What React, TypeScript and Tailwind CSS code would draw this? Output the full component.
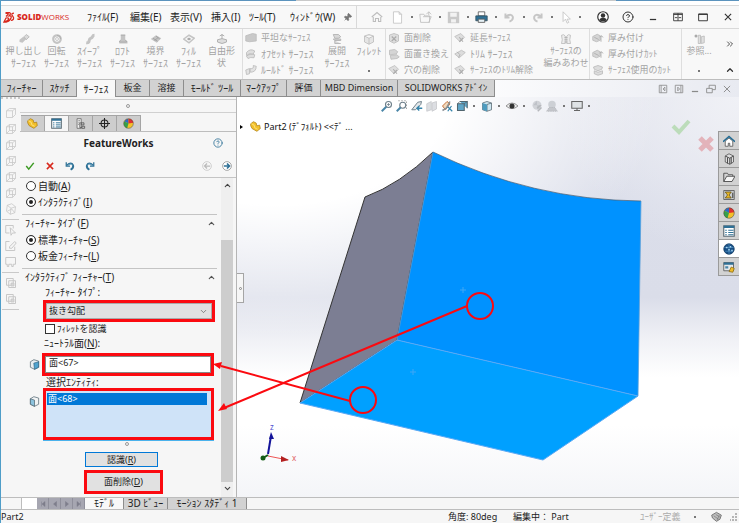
import type { ReactNode } from 'react';
import clsx from 'clsx';
import { ChevronDown, ChevronUp, ChevronsRight, CircleHelp, Pin } from 'lucide-react';

const G = '#c4c4c4';
const D = '#4a4a4a';
const B = '#2f7196';

// 16x16 drawings, keyed by name
const icons: Record<string, ReactNode> = {
  extrude: <><path d="M2 9l5-4 4 3-5 5-4-1z" fill={G} /><path d="M8 5l3-3 4 3-4 4z" fill="#dadada" stroke="#b0b0b0" /></>,
  revolve: <><circle cx="8" cy="8" r="5" fill="none" stroke={G} strokeWidth="3" /><path d="M8 3a5 5 0 0 1 5 5" fill="none" stroke="#aaa" /><circle cx="8" cy="8" r="2" fill="none" stroke="#bbb" /></>,
  sweep: <path d="M3 13c6 1 2-5 6-6 4-1 1-4 5-4" fill="none" stroke={G} strokeWidth="4" />,
  loft: <><path d="M5 2h6v7l3 2v3H3v-3l2-2z" fill={G} /><path d="M5 3h6M5 9l-2 3h10l-2-3" fill="none" stroke="#aaa" /></>,
  boundary: <><path d="M1 8l7-5 7 4-6 6z" fill={G} /><path d="M4 7l6 4M8 4l5 4M6 10l5-4" stroke="#999" /></>,
  fill: <><path d="M1 8l7-5 7 4-7 6z" fill="none" stroke={G} strokeWidth="2" /><path d="M5 8l3-2 3 2-3 2z" fill="#aaa" /></>,
  freeform: <><path d="M2 9q6-3 12 0v3q-6 4-12 0zM8 2v6M5 4l3-2 3 2" fill="#ddd" stroke="#b0b0b0" strokeWidth="1.3" /></>,
  flat: <path d="M1 5l9-3 5 1v9l-9 1-5-1z" fill="#c9c9c9" stroke="#bababa" />,
  offset: <><path d="M2 6q5-6 11-2l-2 4q-5-2-9 2zM2 11q4-4 11-2l-1 4q-5-1-8 1z" fill="#dedede" stroke="#b5b5b5" /></>,
  ruled: <path d="M1 8l5-2v7l-4 1zM7 6q5 1 4-4l4 1q0 8-8 8z" fill="#e3e3e3" stroke="#b5b5b5" />,
  unroll: <path d="M3 2h7l3 3-3 2H5zM3 8h10v2H5zM5 10v4h8" fill="#d8d8d8" stroke="#aaa" />,
  cube: <path d="M2 4l6-2 6 2v8l-6 3-6-3zM2 4l6 3 6-3M8 7v8" fill="#e5e5e5" stroke="#b8b8b8" />,
  delFace: <><path d="M2 4l6-2 6 2v8l-6 3-6-3z" fill="#ddd" stroke="#b8b8b8" /><path d="M5 6l6 6M11 6l-6 6" stroke="#aaa" strokeWidth="1.5" /></>,
  swapFace: <><path d="M2 3l7-1 4 3-2 3-9 1zM3 10l9-1 3 3-3 2-8 1z" fill="#d5d5d5" stroke="#b8b8b8" /></>,
  patch: <><path d="M1 6l8-4 5 5-6 6z" fill="#dedede" stroke="#bababa" /><path d="M7 7l5 6M12 8l-5 5" stroke="#aeaeae" strokeWidth="1.5" /></>,
  trim: <><path d="M1 8l9-5 5 3-8 7z" fill="#dcdcdc" stroke="#b8b8b8" /><path d="M4 5l4 4-2 4" fill="none" stroke="#a5a5a5" /></>,
  knit: <><path d="M2 3q3-2 5 1v10H2l1-5zM14 3q-3-2-5 1v10h5l-1-5z" fill="#eee" stroke="#b5b5b5" /><path d="M6 6h4M6 9h4M6 12h4" stroke="#aaa" /></>,
  thicken: <><path d="M1 6l6-3 4 2v6l-5 2-5-2z" fill="#d5d5d5" stroke="#b5b5b5" /><path d="M12 5v8M10 7l2-2 3 2M3 7l6 3" fill="none" stroke="#a5a5a5" /></>,
  cut: <><path d="M2 4l6-2 6 2-1 3-5 2-5-2zM3 9l5 2 6-2v4l-6 2-5-2z" fill="#dcdcdc" stroke="#b5b5b5" /></>,
  refGeom: <><circle cx="4" cy="4" r="2" fill="#aaa" /><path d="M7 3h3v11H7zM11 5l4-1v9l-4 1z" fill="#e0e0e0" stroke="#b5b5b5" /></>,
  home: <path d="M1 8l7-6 7 6M3 8v6h3v-4h4v4h3V8" fill="none" stroke="#bcbcbc" strokeWidth="1.4" />,
  doc: <path d="M3 1h7l3 3v11H3zM10 1v3h3" fill="#fff" stroke="#c2c2c2" />,
  open: <path d="M1 4h5l1 2h6v8H2zM5 7h10l-3 7M9 4l3-3 3 3M12 1v4" fill="none" stroke="#bdbdbd" />,
  save: <><path d="M1 1h14v14H1z" fill="#c9c9c9" /><path d="M4 2h8v5H4zM5 10h6v4H5z" fill="#f2f2f2" /></>,
  print: <><path d="M4 1h8v5H4z" fill="#fff" stroke="#555" /><path d="M1 6h14v6H1z" fill={B} stroke="#35505e" /><path d="M4 10h8v4H4z" fill="#e6f1f6" stroke="#555" /></>,
  undoGray: <path d="M3 3v5h5M3 7q7-5 9 0 1 4-4 6" fill="none" stroke="#c6c6c6" strokeWidth="2.4" />,
  redoGray: <path d="M13 3v5H8M13 7Q6 2 4 7q-1 4 4 6" fill="none" stroke="#c6c6c6" strokeWidth="2.4" />,
  cursor: <path d="M5 1v12l3-3 2 5 2-1-2-4h4z" fill="#fff" stroke="#c2c2c2" />,
  user: <><circle cx="8" cy="8" r="7" fill="#fff" stroke="#333" strokeWidth="1.6" /><circle cx="8" cy="6" r="3" fill="#333" /><path d="M3 12q1-3 5-3t5 3q-5 4-10 0z" fill="#333" /></>,
  min: <path d="M3 12h10" stroke="#333" strokeWidth="2" />,
  split: <path d="M1 2h14v12H1zM8 2v12M1 4h14M3 9h4M9 9h4" fill="none" stroke="#333" strokeWidth="1.4" />,
  max: <path d="M1 3h14v11H1zM1 4h14" fill="none" stroke="#333" strokeWidth="1.5" />,
  close: <path d="M3 3l10 10M13 3L3 13" stroke="#333" strokeWidth="1.8" />,
  paneL: <path d="M2 2h12v12H2zM5 2v12M11 5L8 8l3 3z" fill="none" stroke="#8a8a8a" strokeWidth="1.3" />,
  paneR: <path d="M2 2h12v12H2zM11 2v12M6 5l3 3-3 3z" fill="none" stroke="#8a8a8a" strokeWidth="1.3" />,
  minGray: <path d="M3 12h10" stroke="#8a8a8a" strokeWidth="2" />,
  restore: <path d="M1 7h9v7H1zM5 7V2h10v7h-5" fill="none" stroke="#8a8a8a" strokeWidth="1.4" />,
  closeGray: <path d="M3 3l10 10M13 3L3 13" stroke="#8a8a8a" strokeWidth="1.5" />,
  part: <><path d="M1 4l4-3 4 2 1 4 4-1 1 5-5 4-7-4-2-4z" fill="#f3c12b" stroke="#a9790f" /><path d="M2 4l4 2 1 4 4 2" fill="none" stroke="#fce58a" strokeWidth="1.2" /></>,
  props: <><path d="M1 1h14v14H1z" fill="#fff" stroke="#5a6a74" strokeWidth="1.5" /><path d="M1 1h14v3H1z" fill={B} /><path d="M3 7h2M3 10h2M3 13h2M7 7h7M7 10h7M7 13h7" stroke={B} strokeWidth="1.4" /></>,
  config: <><path d="M3 1h6v14H3z" fill="#f0f0f0" stroke="#555" /><path d="M5 4h2M5 7h2M5 10l4-4M9 7h4v3H9zM10 12h4v3h-4zM7 9v5h3" fill="none" stroke="#555" strokeWidth="1.2" /></>,
  target: <><circle cx="8" cy="8" r="5" fill="none" stroke="#222" strokeWidth="1.5" /><path d="M8 0v16M0 8h16" stroke="#222" strokeWidth="1.5" /></>,
  ball: <><circle cx="8" cy="8" r="7" fill="#f3c12b" /><path d="M8 8V1a7 7 0 0 0-6 4z" fill="#2b6cc4" /><path d="M8 8V1a7 7 0 0 1 7 6z" fill="#e03030" /><path d="M8 8l-6-3a7 7 0 0 0 4 10z" fill="#35a04a" /><circle cx="8" cy="8" r="7" fill="none" stroke="#444" strokeWidth=".7" /></>,
  ok: <path d="M2 8l4 5 8-10" fill="none" stroke="#3c9a22" strokeWidth="2.4" />,
  cancel: <path d="M3 3l10 10M13 3L3 13" stroke="#d8281c" strokeWidth="2.4" />,
  undo: <><path d="M2 2v6h6" fill="none" stroke={B} strokeWidth="2" /><path d="M3 7q7-6 10 0 1 4-4 7" fill="none" stroke={B} strokeWidth="3" /><path d="M4 7q6-4 8 0" fill="none" stroke="#8fc3dc" /></>,
  redo: <><path d="M14 2v6H8" fill="none" stroke={B} strokeWidth="2" /><path d="M13 7Q6 1 3 7q-1 4 4 7" fill="none" stroke={B} strokeWidth="3" /><path d="M12 7Q6 3 4 7" fill="none" stroke="#8fc3dc" /></>,
  back: <><circle cx="8" cy="8" r="7" fill="none" stroke="#bbb" /><path d="M13 8H4M8 4L4 8l4 4" fill="none" stroke="#bbb" strokeWidth="2" /></>,
  next: <><circle cx="8" cy="8" r="7" fill="#fff" stroke="#777" /><path d="M3 8h9M8 4l4 4-4 4" fill="none" stroke={B} strokeWidth="2.6" /></>,
  faceBlue: <><path d="M2 4l5-3 7 2v9l-6 3-6-3z" fill="#e8eef1" stroke="#4a5f6b" /><path d="M7 6l7-2v8l-6 3z" fill="#4fa3cf" stroke="#2b6382" /></>,
  faceLine: <><path d="M2 4l5-3 7 2v9l-6 3-6-3z" fill="#f1f3f4" stroke="#4a5f6b" /><path d="M2 4l6 2v9l-6-3z" fill="#8cc3de" stroke="#4a5f6b" /></>,
  zoomFit: <><circle cx="10" cy="6" r="4" fill="#fff" stroke="#6e7f8a" strokeWidth="1.5" /><path d="M7 9l-6 6" stroke="#4a86a8" strokeWidth="2.6" /><path d="M8 6h4M10 4v4" stroke="#6e7f8a" /></>,
  zoomArea: <><circle cx="9" cy="7" r="4" fill="#fff" stroke="#6e7f8a" strokeWidth="1.5" /><path d="M6 10l-5 5" stroke="#4a86a8" strokeWidth="2.6" /><path d="M3 1h11v11" fill="none" stroke="#888" strokeDasharray="2 2" /></>,
  prevView: <><path d="M1 13l8-10 5-1-1 4-7 7z" fill="#e4e8ea" stroke="#6e7f8a" strokeWidth="1.3" /><path d="M15 11H8M11 8l-3 3 3 3" fill="none" stroke="#3584ab" strokeWidth="2" /></>,
  section: <path d="M1 5l6-3v11l-6 2zM8 4l6-2v10l-6 3z" fill="#dcdee2" stroke="#c4c6ca" />,
  dynView: <><path d="M2 8l6-6 4 3-6 8z" fill="#f3d9bb" stroke="#c2703a" strokeWidth="1.3" /><path d="M2 14l5-3 5-9" fill="none" stroke="#8a8f94" strokeWidth="2" /><path d="M9 9l6 6M9 15l5-7" stroke="#3584ab" strokeWidth="1.6" /></>,
  orient: <><path d="M2 5h9v9H2zM5 2h10v9" fill="#5fa6c8" stroke="#51656f" strokeWidth="1.4" /><path d="M2 5l3-3M11 5l4-3" stroke="#51656f" /></>,
  display: <><path d="M2 4l6-2 6 2v9l-6 2-6-2z" fill="#cfe6f0" stroke="#54656f" /><path d="M8 6v9M8 6l6-2" stroke="#54656f" /><path d="M2 4l6 2v9l-6-2z" fill="#4d9bbf" /></>,
  eye: <><path d="M0 8q8-8 16 0-8 7-16 0z" fill="#eee" stroke="#777" /><circle cx="8" cy="8" r="3.4" fill="#333" /></>,
  paint: <><circle cx="8" cy="7" r="6" fill="#d1d3d8" /><path d="M3 7l5-6v6zM8 7h6l-5 6z" fill="#bfc2c8" /><path d="M8 11l5-4M9 15l5-5" stroke="#b5b7bb" strokeWidth="2" /></>,
  scene: <><circle cx="8" cy="6" r="5" fill="#cdd0d5" /><path d="M1 15l3-5h8l3 5z" fill="#c4c6cb" stroke="#b2b4b9" strokeDasharray="2 1" /></>,
  monitor: <><path d="M1 2h14v9H1z" fill="#dfe3e6" stroke="#666" strokeWidth="1.4" /><path d="M8 11v3M4 14h8" stroke="#666" strokeWidth="1.5" /></>,
  homeBlue: <><path d="M3 8v7h4v-4h2v4h4V8L8 4z" fill="#fff" stroke={D} /><path d="M0 9l8-7 8 7" fill="none" stroke="#236b93" strokeWidth="2.2" /></>,
  library: <><path d="M3 4l5-3 6 3v8l-5 3-6-3z" fill="#ddd" stroke={D} /><path d="M3 4l6 3v8M6 6v8M9 7l5-3M11 6v8" fill="none" stroke={D} strokeWidth="1.3" /></>,
  folder: <path d="M1 3h5l1 2h6v2M1 3v11h11l4-7H5l-4 7" fill="#f6f6f6" stroke={D} strokeWidth="1.2" />,
  palette: <><path d="M1 2h14v12H1z" fill="#c9cdd0" stroke={D} /><path d="M3 4h8l-3 4 3 4H3l3-4z" fill="#eab825" stroke="#5e4c10" /><path d="M13 5v7" stroke={D} strokeWidth="1.5" /></>,
  globe: <><circle cx="8" cy="8" r="7" fill="#174f86" stroke="#173d63" /><path d="M2 6h12M3 11h10M8 1v14" fill="none" stroke="#5d9dcb" strokeWidth=".8" /><path d="M4 5h2v2H4zM9 4h2v2H9zM7 8h2v2H7zM11 9h2v2h-2z" fill="#a5d5f2" /></>,
  forum: <><path d="M1 2h13v11H1z" fill="#e5e9eb" stroke={D} /><path d="M1 2h13v3H1z" fill={B} /><path d="M3 7h4v3H3z" fill="#4a86a8" /><path d="M8 14l3-6 4 2-2 5z" fill="#f0bd2b" stroke="#8a6a10" /></>,
  tag: <><path d="M1 6l7-4 7 4-2 6-5 3-6-5z" fill="#bdbdbd" stroke="#666" strokeWidth="1.2" /><path d="M4 7l7 5M7 5l6 4M9 13l3-7" stroke="#777" /></>,
  frameA: <path d="M2 5l4-3h8v8l-4 4H2zM2 5h8v9M10 5l4-3" fill="none" stroke="#c6c6c6" />,
  frameB: <path d="M2 5l4-3h8v8l-4 4H2zM2 5h8v9M10 5l4-3M6 2v8h8M2 14l4-4" fill="none" stroke="#c6c6c6" />,
  frameC: <path d="M3 3l6-2 5 4-1 8-6 2-5-4zM3 3l5 4 6-2M8 7l-1 8M3 11l6-3 4 5" fill="none" stroke="#c6c6c6" />,
  frameD: <path d="M1 2h13v9h-3v3H9v-3H5v3H3v-3H1z" fill="none" stroke="#c6c6c6" strokeWidth="1.3" />,
  pick: <path d="M1 2h10v4M1 2v10h5M7 5l7 7-4 0-2 3z" fill="none" stroke="#c6c6c6" strokeWidth="1.3" />,
  edit: <path d="M6 2H1v12h12V9M6 9l7-7 2 2-6 7H6z" fill="none" stroke="#c6c6c6" strokeWidth="1.3" />,
  copy: <><path d="M2 2h9v9H2zM5 5h9v9H5z" fill="#f6f6f6" stroke="#c6c6c6" strokeWidth="1.3" /><path d="M8 8h4v4H8z" fill="#d6d6d6" stroke="#c6c6c6" /></>,
};

function Icon({ name, className = 'size-3' }: { name: string; className?: string }) {
  return (
    <svg viewBox="0 0 16 16" className={clsx('shrink-0', className)} aria-hidden="true">
      {icons[name]}
    </svg>
  );
}

function Dot({ className = 'w-2' }: { className?: string }) {
  return (
    <span className={clsx('flex justify-center', className)}>
      <span className="size-[2px] bg-[#777]" />
    </span>
  );
}

// half-width kana run small, so they get the larger size
const labelSize = (text: string) => (/^[\uff66-\uff9f ]+$/.test(text) ? 'text-[10px]' : 'text-[9px]');

const menus = ['ﾌｧｲﾙ(F)', '編集(E)', '表示(V)', '挿入(I)', 'ﾂｰﾙ(T)', 'ｳｨﾝﾄﾞｳ(W)'];

const quickTools = ['doc', 'open', 'save', 'print', 'undoGray', 'redoGray', 'cursor'];

const bigTools = [
  { icon: 'extrude', lines: ['押し出し', 'ｻｰﾌｪｽ'] },
  { icon: 'revolve', lines: ['回転', 'ｻｰﾌｪｽ'] },
  { icon: 'sweep', lines: ['ｽｲｰﾌﾟ', 'ｻｰﾌｪｽ'] },
  { icon: 'loft', lines: ['ﾛﾌﾄ', 'ｻｰﾌｪｽ'] },
  { icon: 'boundary', lines: ['境界', 'ｻｰﾌｪｽ'] },
  { icon: 'fill', lines: ['ﾌｨﾙ', 'ｻｰﾌｪｽ'] },
  { icon: 'freeform', lines: ['自由形', '状'] },
];

const surfaceTools = [
  { icon: 'flat', label: '平坦なｻｰﾌｪｽ' },
  { icon: 'offset', label: 'ｵﾌｾｯﾄ ｻｰﾌｪｽ' },
  { icon: 'ruled', label: 'ﾙｰﾙﾄﾞ ｻｰﾌｪｽ' },
];
const faceTools = [
  { icon: 'delFace', label: '面削除' },
  { icon: 'swapFace', label: '面置き換え' },
  { icon: 'patch', label: '穴の削除' },
];
const trimTools = [
  { icon: 'patch', label: '延長ｻｰﾌｪｽ' },
  { icon: 'trim', label: 'ﾄﾘﾑ ｻｰﾌｪｽ' },
  { icon: 'patch', label: 'ｻｰﾌｪｽのﾄﾘﾑ解除' },
];
const thickTools = [
  { icon: 'thicken', label: '厚み付け' },
  { icon: 'thicken', label: '厚み付けｶｯﾄ' },
  { icon: 'cut', label: 'ｻｰﾌｪｽ使用のｶｯﾄ' },
];

const commandTabs = [
  { label: 'ﾌｨｰﾁｬｰ', width: 'w-[42px] text-[10px]' },
  { label: 'ｽｹｯﾁ', width: 'w-[34px] text-[10px]' },
  { label: 'ｻｰﾌｪｽ', width: 'w-[39px] text-[10px]' },
  { label: '板金', width: 'w-[34px] text-[9px]' },
  { label: '溶接', width: 'w-[34px] text-[9px]' },
  { label: 'ﾓｰﾙﾄﾞ ﾂｰﾙ', width: 'w-[57px] text-[10px]' },
  { label: 'ﾏｰｸｱｯﾌﾟ', width: 'w-[46px] text-[10px]' },
  { label: '評価', width: 'w-[34px] text-[9px]' },
  { label: 'MBD Dimension', width: 'w-[77px] text-[9px]' },
  { label: 'SOLIDWORKS ｱﾄﾞｲﾝ', width: 'w-[97px] text-[9px]' },
];

const headsUp = ['zoomFit', 'zoomArea', 'prevView', 'section', 'dynView', 'orient', '-', 'display', '-', 'eye', '-', 'paint', 'scene', '-', 'monitor', '-'];
const taskPane = ['homeBlue', 'library', 'folder', 'palette', 'ball', 'props', 'globe', 'forum'];
const sideIcons = ['frameA', 'frameB', 'frameB', 'frameB', 'frameB', 'frameB', 'frameC', '-', 'pick', 'edit', 'frameD', '-', 'copy', 'copy', '-'];

function TitleBar() {
  return (
    <header className="flex h-6 items-center border-t border-b border-[#d9d9d9] bg-[#f8f8f8]">
      <div className="flex w-[86px] shrink-0 items-center gap-[2px] pl-[2px]">
        <svg viewBox="0 0 24 24" className="size-3" aria-hidden="true">
          <path d="M5 3h8q4 2-1 7 6-1 4 4-2 6-9 8H2l4-8q8-1 4 4-3 3-6 3M5 5q7-1 5 2l-4 4M22 4q-5 0-4 4l3 5q1 5-5 6" fill="none" stroke="#d8281c" strokeWidth="2.5" />
        </svg>
        <span className="font-['Open_Sans'] text-[8px] text-[#d8281c]">
          <b className="font-extrabold">SOLID</b>WORKS
        </span>
      </div>
      <nav className="grid shrink-0 grid-cols-[43px_40px_41px_38px_41px_53px]">
        {menus.map((menu) => (
          <button key={menu} className="text-left text-[10px] whitespace-nowrap text-[#222]">
            {menu}
          </button>
        ))}
      </nav>
      <Pin className="size-[9px] shrink-0 rotate-45 fill-[#777] text-[#777]" />
      <div className="ml-1 flex h-full shrink-0 items-center border-l border-[#d9d9d9] pl-[14px]">
        <Icon name="home" />
        <div className="flex items-center pl-2">
          {quickTools.map((tool) => (
            <button key={tool} className="flex items-center" aria-label={tool}>
              <Icon name={tool} className="size-[13px]" />
              <Dot className="w-[15px]" />
            </button>
          ))}
        </div>
      </div>
      <div className="ml-auto flex items-center gap-[13px] pr-[5px]">
        <Icon name="user" className="size-3" />
        <CircleHelp className="size-3 shrink-0 text-[#333]" />
        {['min', 'split', 'max', 'close'].map((name) => (
          <button key={name} aria-label={name} className="flex w-3 justify-center">
            <Icon name={name} className="size-[10px]" />
          </button>
        ))}
      </div>
    </header>
  );
}

function BigTool({ icon, lines, className }: { icon: string; lines: string[]; className: string }) {
  return (
    <button className={clsx('flex shrink-0 flex-col items-center pt-1 whitespace-nowrap', className)}>
      <Icon name={icon} className="size-3" />
      {lines.map((line) => (
        <span key={line} className={clsx('leading-3', labelSize(line), 'leading-3')}>
          {line}
        </span>
      ))}
    </button>
  );
}

function ToolList({ items, className }: { items: { icon: string; label: string }[]; className: string }) {
  return (
    <div className={clsx('flex shrink-0 flex-col pt-[1px] pl-[2px]', className)}>
      {items.map((item) => (
        <button key={item.label} className={clsx('flex h-4 items-center gap-1 whitespace-nowrap', labelSize(item.label))}>
          <Icon name={item.icon} />
          {item.label}
        </button>
      ))}
    </div>
  );
}

function Ribbon() {
  return (
    <div className="flex h-[51px] border-b border-[#bdbdbd] bg-[#f8f8f8] text-[#a3a3a3]">
      <div className="flex shrink-0 pl-[6px]">
        {bigTools.map((tool) => (
          <BigTool key={tool.icon} {...tool} className="w-[33px]" />
        ))}
      </div>
      <ToolList items={surfaceTools} className="ml-[4px] w-[79px] border-l border-[#dedede]" />
      <BigTool icon="unroll" lines={['展開', 'ｻｰﾌｪｽ']} className="w-8" />
      <div className="flex flex-col items-center">
        <BigTool icon="cube" lines={['ﾌｨﾚｯﾄ']} className="w-8" />
        <span className="mt-[13px] size-[2px] bg-[#777]" />
      </div>
      <ToolList items={faceTools} className="w-[66px] border-l border-[#dedede]" />
      <ToolList items={trimTools} className="w-[92px] border-l border-[#dedede]" />
      <BigTool icon="knit" lines={['ｻｰﾌｪｽの', '編みあわせ']} className="w-[46px]" />
      <ToolList items={thickTools} className="w-[92px] border-l border-[#dedede]" />
      <div className="flex flex-col items-center border-l border-[#dedede]">
        <BigTool icon="refGeom" lines={['参照...']} className="w-[34px]" />
        <span className="mt-[13px] size-[2px] bg-[#777]" />
      </div>
      <div className="ml-auto flex flex-col items-center gap-4 pt-[10px] pr-1 text-[#333]">
        <ChevronsRight className="size-[10px]" />
        <ChevronUp className="size-[10px]" strokeWidth={3} />
      </div>
    </div>
  );
}

function CommandTabs() {
  return (
    <div className="flex h-[17px] bg-[#eceef4] bg-linear-to-r from-white from-60% to-[#e8eaf1]">
      <div className="flex shrink-0" role="tablist">
        {commandTabs.map((tab, index) => (
          <button
            key={tab.label}
            role="tab"
            aria-selected={index === 2}
            className={clsx(
              'border-r border-[#8d8d8d] leading-4 whitespace-nowrap text-[#222]',
              tab.width,
              index === 2 ? 'bg-[#f8f8f8]' : 'border-b bg-[#d2d2d2]',
            )}
          >
            {tab.label}
          </button>
        ))}
      </div>
      <div className="ml-auto flex items-center gap-[6px] pr-[7px]">
        {['paneL', 'paneR', 'minGray', 'restore', 'closeGray'].map((name) => (
          <Icon key={name} name={name} className="size-[10px]" />
        ))}
      </div>
    </div>
  );
}

function SideBar() {
  return (
    <aside className="flex w-[19px] shrink-0 flex-col items-center border-t-2 border-dotted border-[#c9c9c9] bg-[#f6f6f6] pt-[8px]">
      {sideIcons.map((name, index) =>
        name === '-' ? (
          <span key={index} className="mb-1 h-[1px] w-[17px] bg-[#c9c9c9]" />
        ) : (
          <Icon key={index} name={name} className="mb-1 size-3" />
        ),
      )}
    </aside>
  );
}

function Radio({ name, label, hotkey, checked }: { name: string; label: string; hotkey: string; checked?: boolean }) {
  return (
    <label className="flex h-4 items-center gap-[2px] pl-[4px] text-[10px]">
      <input
        type="radio"
        name={name}
        defaultChecked={checked}
        className="size-[10px] appearance-none rounded-full border border-[#333] bg-white checked:bg-[#222] checked:inset-ring-2 checked:inset-ring-white"
      />
      <span>
        {label}(<u>{hotkey}</u>)
      </span>
    </label>
  );
}

function GroupHeader({ label, hotkey }: { label: string; hotkey: string }) {
  return (
    <button className="mt-1 flex h-[18px] w-full items-center justify-between border-t border-[#c4c4c4] pr-[1px] pl-[3px] text-[10px]">
      <span>
        {label}(<u>{hotkey}</u>)
      </span>
      <ChevronUp className="size-[9px] text-[#555]" strokeWidth={3} />
    </button>
  );
}

function PropertyPanel() {
  return (
    <section className="flex w-[216px] shrink-0 flex-col bg-[#f6f6f6] text-[#222]">
      <div className="mt-[2px] flex h-[14px] items-center justify-center border-t border-b border-[#d0d0d0]">
        <span className="size-1 rounded-full border border-[#999]" />
      </div>
      <div className="flex h-[19px] items-end border-b border-[#bdbdbd] pl-[1px]">
        {['part', 'props', 'config', 'target', 'ball'].map((name, index) => (
          <button
            key={name}
            aria-label={name}
            className={clsx(
              'flex h-4 w-6 items-center justify-center border border-b-0 border-l-0 border-[#a5a5a5]',
              index === 1 ? 'bg-[#f6f6f6]' : 'bg-[#cdcdcd]',
            )}
          >
            <Icon name={name} className="size-[11px]" />
          </button>
        ))}
      </div>
      <div className="grid h-[22px] grid-cols-[4px_1fr_20px] items-center pr-[3px]">
        <h1 className="col-start-2 text-center font-['Noto_Sans'] text-[10px] font-bold">FeatureWorks</h1>
        <CircleHelp className="size-[10px] text-[#2f7196]" />
      </div>
      <div className="flex h-[24px] items-center gap-[10px] border-b border-[#c4c4c4] pr-1 pl-[5px]">
        <Icon name="ok" className="size-[10px]" />
        <Icon name="cancel" className="size-[10px]" />
        <Icon name="undo" className="size-[10px]" />
        <Icon name="redo" className="size-[10px]" />
        <span className="ml-auto" />
        <Icon name="back" className="size-[10px]" />
        <Icon name="next" className="size-[10px]" />
      </div>
      <div className="flex">
        <form className="flex h-[319px] w-[197px] flex-col pl-[2px]">
          <Radio name="mode" label="自動" hotkey="A" />
          <Radio name="mode" label="ｲﾝﾀﾗｸﾃｨﾌﾞ" hotkey="I" checked />
          <GroupHeader label="ﾌｨｰﾁｬｰ ﾀｲﾌﾟ" hotkey="F" />
          <Radio name="type" label="標準ﾌｨｰﾁｬｰ" hotkey="S" checked />
          <Radio name="type" label="板金ﾌｨｰﾁｬｰ" hotkey="L" />
          <GroupHeader label="ｲﾝﾀﾗｸﾃｨﾌﾞ ﾌｨｰﾁｬｰ" hotkey="T" />

          <label htmlFor="feature" className="h-[14px] pl-[23px] text-[10px] leading-3">ﾌｨｰﾁｬｰ ﾀｲﾌﾟ:</label>
          <div className="relative ml-[21px] flex h-[22px] w-[172px] border-[3px] border-[#fb0a10]">
            <select id="feature" className="w-full appearance-none border border-[#aaa] bg-[#e1e1e1] pl-[2px] text-[9px] leading-3">
              <option>抜き勾配</option>
            </select>
            <ChevronDown className="pointer-events-none absolute top-1 right-1 size-[9px] text-[#666]" />
          </div>
          <label className="flex h-[13px] items-center gap-[2px] pl-[23px] text-[9px]">
            <input type="checkbox" className="size-[10px] appearance-none border border-[#333] bg-white" />
            ﾌｨﾚｯﾄを認識
          </label>
          <label htmlFor="neutral" className="h-[18px] pl-[22px] text-[10px] leading-4">
            ﾆｭｰﾄﾗﾙ面(<u>N</u>):
          </label>

          <div className="flex items-center gap-[2px] pl-[7px]">
            <Icon name="faceBlue" className="size-[11px]" />
            <div className="flex h-[23px] w-[172px] border-[3px] border-[#fb0a10]">
              <input id="neutral" defaultValue="面<67>" className="w-full border border-[#888] bg-white pb-1 pl-[3px] text-[9px] leading-3" />
            </div>
          </div>
          <span id="entities" className="h-[12px] pl-[24px] text-[10px] leading-3">選択ｴﾝﾃｨﾃｨ:</span>
          <div className="flex items-start gap-[3px] pl-[7px]">
            <Icon name="faceLine" className="mt-2 size-[11px]" />
            <ul role="listbox" aria-labelledby="entities" className="h-[52px] w-[171px] border-[3px] border-[#fb0a10] bg-[#cfe3f8] shadow-[0_1px_0_#4ab2ec]">
              <li role="option" aria-selected className="mr-1 ml-[1px] mt-[2px] h-3 bg-[#0078d7] pl-[1px] text-[9px] leading-[11px] text-white">
                面&lt;68&gt;
              </li>
            </ul>
          </div>
          <span className="mt-[2px] ml-[103px] size-1 rounded-full border border-[#999]" />
          <button type="button" className="mt-[6px] ml-[63px] h-[15px] w-[73px] border border-[#0078d7] bg-[#e1e1e1] text-[9px] leading-3">
            認識(<u>R</u>)
          </button>
          <button type="button" className="mt-[3px] ml-[62px] h-6 w-[79px] border-[3px] border-[#fb0a10] bg-[#e1e1e1] text-[9px] leading-3">
            面削除(<u>D</u>)
          </button>
        </form>
        <div className="ml-1 flex w-3 flex-col items-center bg-[#efefef] pt-[3px] pb-1 text-[#444]">
          <ChevronUp className="size-[9px]" strokeWidth={3} />
          <span className="mt-[50px] w-full flex-1 bg-[#cdcdcd]" />
          <ChevronDown className="mt-[2px] size-[9px]" strokeWidth={3} />
        </div>
      </div>
    </section>
  );
}

function Viewport() {
  return (
    <main className="relative min-w-0 flex-1 overflow-hidden border-l border-[#b5b5b5] bg-[radial-gradient(ellipse_380px_240px_at_8%_0%,#fff_0%,#fff_45%,transparent_100%),radial-gradient(ellipse_180px_160px_at_100%_0%,#f0f1f6_0%,transparent_100%),linear-gradient(to_bottom,#e2e4ed_0%,#dbdeea_25%,#dadde9_50%,#eff0f5_60%,#fff_70%,#fff_82%,#f4f5f8_100%)]">
      <svg viewBox="237 97 502 400" className="absolute top-0 left-0 h-[400px] w-[502px]" role="img" aria-label="3D model">
        <path d="M365 197Q400 184 433 152L397 340 300 403z" fill="#7c7e93" stroke="#333" strokeWidth="1" />
        <path d="M433 152Q532 200 641 201L638 396 397 340z" fill="#0092ff" />
        <path d="M397 340L638 396 543 460 300 403z" fill="#00a0ff" stroke="#5aa8f5" strokeWidth="1" />
        <path d="M433 152Q532 200 641 201" fill="none" stroke="#4b5d70" strokeWidth=".7" />
        <path d="M433 152L397 340M641 201L638 396" fill="none" stroke="#5c9fd8" strokeWidth=".8" />
        <path d="M460 290h6M463 287v6M410 372h6M413 369v6" stroke="#3ea6f5" />
        <path d="M268 454l3-18" stroke="#14149a" strokeWidth="2" />
        <path d="M271 432l3 7h-5z" fill="#14149a" />
        <path d="M268 456l20 4" stroke="#ee5555" />
        <path d="M281 456l8 4-8 2z" fill="#b32020" />
        <path d="M268 455l-5 3" stroke="#145c14" strokeWidth="2" />
        <circle cx="263" cy="458" r="2.5" fill="#145c14" />
        <text x="270" y="430" fontSize="8" fill="#5050d0">z</text>
        <text x="292" y="461" fontSize="8" fill="#e06060">x</text>
      </svg>

      <div className="relative flex items-center pt-[3px] pl-[142px]">
        {headsUp.map((name, index) =>
          name === '-' ? (
            <Dot key={index} className="w-[10px]" />
          ) : (
            <span key={index} className="flex w-[15px] justify-center">
              <Icon name={name} className="size-3" />
            </span>
          ),
        )}
      </div>
      <div className="relative mt-2 flex items-center gap-[3px] pl-[3px] text-[9px] text-[#111]">
        <span className="mr-1 border-y-2 border-l-[3px] border-y-transparent border-l-black" />
        <Icon name="part" className="size-[11px]" />
        Part2 (ﾃﾞﾌｫﾙﾄ) &lt;&lt;ﾃﾞ ...
      </div>

      <svg viewBox="0 0 48 40" className="absolute top-5 right-[21px] h-10 w-12" aria-hidden="true">
        <path d="M3 9l6 6L19 4" fill="none" stroke="#bcdcba" strokeWidth="4" />
        <path d="M30 21l12 12M42 21L30 33" stroke="#e3b3ba" strokeWidth="5" />
      </svg>
      <div className="absolute top-[34px] right-0 flex w-[21px] flex-col border-t border-l border-[#9a9a9a]">
        {taskPane.map((name) => (
          <button
            key={name}
            aria-label={name}
            className={clsx('flex h-[18px] items-center justify-center border-b border-[#9a9a9a]', name === 'globe' ? 'bg-white' : 'bg-[#d2d2d2]')}
          >
            <Icon name={name} />
          </button>
        ))}
      </div>
      <div className="absolute top-[176px] left-0 flex h-[30px] w-[7px] items-center justify-center border border-l-0 border-[#a5a5a5] bg-[#f6f6f6]">
        <span className="size-[3px] rounded-full border border-[#888]" />
      </div>
    </main>
  );
}

function BottomBar() {
  return (
    <>
      <div className="flex h-[13px] border-t border-b border-[#bdbdbd] bg-[#f6f6f6] pl-[20px] text-[10px] leading-[11px] whitespace-nowrap text-[#222]">
        <span className="w-4 border-l border-[#bdbdbd] bg-white" />
        {['M5 3v10M12 3L6 8l6 5z', 'M11 3L5 8l6 5z', 'M5 3l6 5-6 5z', 'M11 3v10M4 3l6 5-6 5z'].map((d) => (
          <button key={d} aria-label="tab scroll" className="flex w-3 items-center justify-center border-r border-[#8f8f9b] bg-[#a6a6b1]">
            <svg viewBox="0 0 16 16" className="size-2">
              <path d={d} fill="#7d7d8b" stroke="#7d7d8b" />
            </svg>
          </button>
        ))}
        <button className="w-[38px] bg-[#f8f8f8]">ﾓﾃﾞﾙ</button>
        <button className="w-[45px] border-x border-[#8d8d8d] bg-[#d2d2d2]">3D ﾋﾞｭｰ</button>
        <button className="w-[79px] border-r border-[#8d8d8d] bg-[#d2d2d2]">ﾓｰｼｮﾝ ｽﾀﾃﾞｨ 1</button>
      </div>
      <footer className="flex h-[14px] items-center border-b border-[#bdbdbd] bg-[#f6f6f6] pr-[1px] text-[9px] whitespace-nowrap text-[#222]">
        <span>Part2</span>
        <span className="ml-auto w-[65px]">角度: 80deg</span>
        <span className="w-[127px]">編集中： Part</span>
        <span className="w-[48px] text-[#ababab]">ﾕｰｻﾞｰ定義</span>
        <Dot className="w-[14px]" />
        <Icon name="tag" className="ml-[9px] size-[11px]" />
        <svg viewBox="0 0 8 8" className="ml-2 size-2" aria-hidden="true">
          <path d="M6 0v2M6 3v2M3 3v2M6 6v2M3 6v2M0 6v2" stroke="#b5b5b5" strokeWidth="2" />
        </svg>
      </footer>
    </>
  );
}

function Callouts() {
  return (
    <svg viewBox="1 0 739 523" className="pointer-events-none absolute top-0 left-0 h-[523px] w-[739px]" aria-hidden="true">
      <g fill="none" stroke="#fb0a10" strokeWidth="2">
        <circle cx="480" cy="306" r="13" />
        <circle cx="363" cy="400" r="13" />
        <path d="M467 306L224 408M350 401L221 366" />
      </g>
      <path d="M218 411l6-8 3 6zM213 364l9-2-2 7z" fill="#fb0a10" />
    </svg>
  );
}

export default function App() {
  return (
    <div className="relative w-full overflow-hidden border-l border-[#4f9dc8] bg-white font-['Noto_Sans','Noto_Sans_CJK_JP',sans-serif]">
      <div className="flex h-[5px]">
        <span className="h-[1px] w-2/5 bg-[#5b93bd]" />
        <span className="h-[1px] flex-1 bg-[#c9c9c9]" />
        <span className="h-[1px] w-1/6 bg-[#5b93bd]" />
      </div>
      <TitleBar />
      <Ribbon />
      <CommandTabs />
      <div className="flex">
        <SideBar />
        <PropertyPanel />
        <Viewport />
      </div>
      <BottomBar />
      <Callouts />
    </div>
  );
}
